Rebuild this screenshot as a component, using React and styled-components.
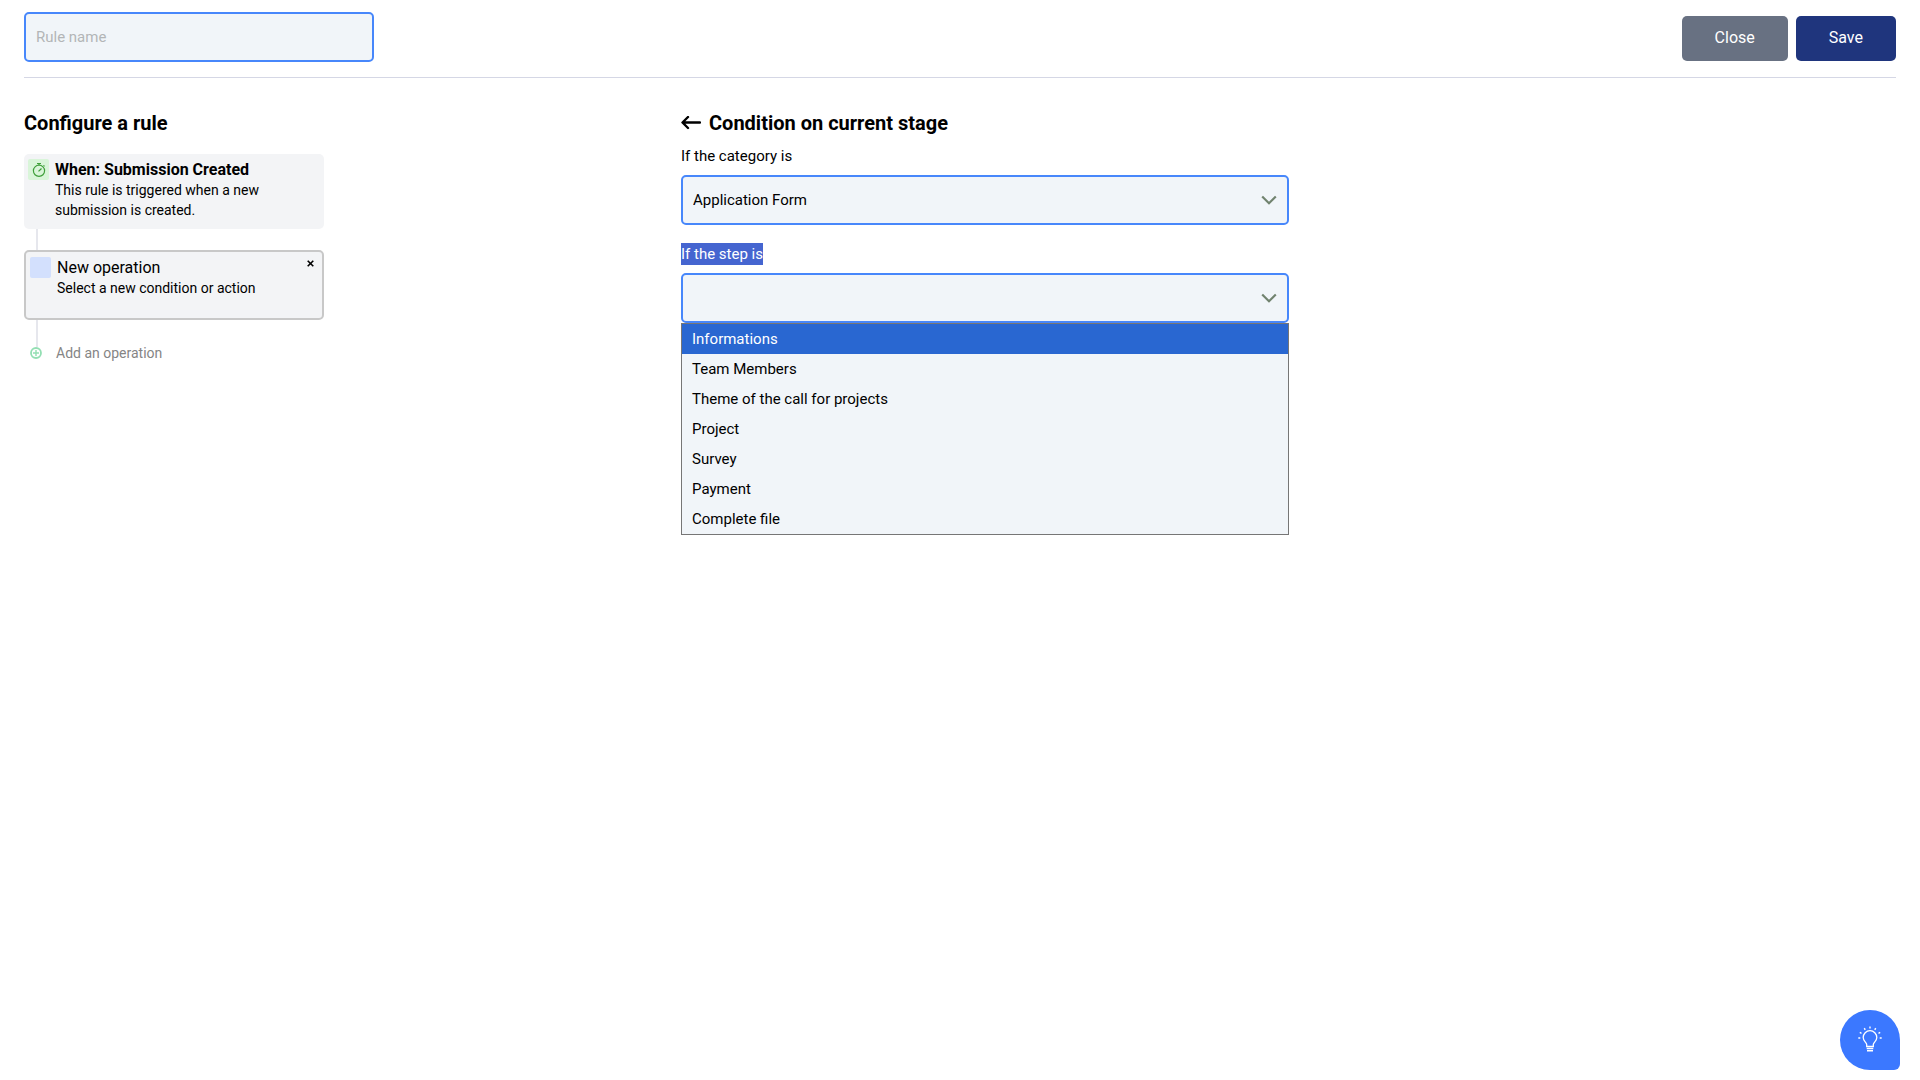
import { useState } from "react";
import styled, { createGlobalStyle } from "styled-components";

const steps = [
  "Informations",
  "Team Members",
  "Theme of the call for projects",
  "Project",
  "Survey",
  "Payment",
  "Complete file",
];

function Header() {
  const [name, setName] = useState("");

  return (
    <HeaderContainer>
      <RuleNameInput
        aria-label="Rule name"
        placeholder="Rule name"
        value={name}
        onChange={(e) => setName(e.target.value)}
      />
      <HeaderActions>
        <ActionButton>Close</ActionButton>
        <ActionButton $primary>Save</ActionButton>
      </HeaderActions>
    </HeaderContainer>
  );
}

function RuleColumn() {
  return (
    <section>
      <Heading>Configure a rule</Heading>
      <Card>
        <CardIcon $color="#d9f5d9">
          <TimerIcon />
        </CardIcon>
        <CardText>
          <CardTitle $bold>When: Submission Created</CardTitle>
          <CardDescription>
            This rule is triggered when a new submission is created.
          </CardDescription>
        </CardText>
      </Card>
      <Connector />
      <Card $selected>
        <CardIcon $color="#d3e0fd" />
        <CardText>
          <CardTitle>New operation</CardTitle>
          <CardDescription>Select a new condition or action</CardDescription>
        </CardText>
        <RemoveButton aria-label="Remove operation">
          <svg width="8" height="7" viewBox="0 0 8 7">
            <path d="M.7.7l5.6 5.6M6.3.7L.7 6.3" stroke="#000" strokeWidth="1.6" />
          </svg>
        </RemoveButton>
      </Card>
      <Connector $long />
      <AddButton>
        <svg width="12" height="12" viewBox="0 0 12 12" fill="none" stroke="#93dfb3">
          <circle cx="6" cy="6" r="5" strokeWidth="1.8" />
          <path d="M6 3v6M3 6h6" strokeWidth="1.4" />
        </svg>
        Add an operation
      </AddButton>
    </section>
  );
}

function ConditionColumn() {
  const [step, setStep] = useState(steps[0]);

  return (
    <section>
      <TitleRow>
        <BackButton aria-label="Back">
          <svg width="20" height="14" viewBox="0 0 20 14" fill="none" stroke="#000">
            <path
              d="M7 1L1.500 6.500L7 12M2 6.500H19"
              strokeWidth="2.4"
              strokeLinecap="round"
              strokeLinejoin="round"
            />
          </svg>
        </BackButton>
        <Heading>Condition on current stage</Heading>
      </TitleRow>
      <Field>
        <Label htmlFor="category">If the category is</Label>
        <SelectBox>
          <Select id="category" defaultValue="form">
            <option value="form">Application Form</option>
          </Select>
          <Chevron />
        </SelectBox>
      </Field>
      <Field>
        <Label htmlFor="step">
          <Highlight>If the step is</Highlight>
        </Label>
        <SelectBox>
          <Select id="step" defaultValue="">
            <option value="" />
          </Select>
          <Chevron />
          <Options role="listbox" aria-label="If the step is">
            {steps.map((item) => (
              <Option
                key={item}
                role="option"
                aria-selected={item === step}
                $active={item === step}
                onMouseEnter={() => setStep(item)}
              >
                {item}
              </Option>
            ))}
          </Options>
        </SelectBox>
      </Field>
    </section>
  );
}

function TimerIcon() {
  return (
    <svg width="15" height="15" viewBox="0 0 15 15" fill="none" stroke="#3f9f3a">
      <circle cx="8" cy="8.8" r="5.6" strokeWidth="1.2" />
      <path d="M6 1.500h4M8 1.500v1.600M12.500 3.300l1 1" strokeWidth="1.2" />
      <path d="M7.500 9.400L10.500 6.500" strokeWidth="1.3" />
    </svg>
  );
}

function Chevron() {
  return (
    <ChevronIcon width="16" height="10" viewBox="0 0 16 10" fill="none">
      <path d="M1.2 1.5L8 8.2L14.8 1.5" stroke="#71836f" strokeWidth="2.2" />
    </ChevronIcon>
  );
}

function App() {
  return (
    <>
      <GlobalStyle />
      <Page>
        <Header />
        <Main>
          <RuleColumn />
          <ConditionColumn />
        </Main>
      </Page>
      <HelpButton aria-label="Help">
        <svg width="26" height="28" viewBox="0 0 26 28" fill="none" stroke="#fff">
          <path
            d="M9.7 20.5v-2C9.7 16.6 6.2 15 6.2 11.5a6.8 6.8 0 0 1 13.6 0C19.8 15 16.3 16.6 16.3 18.5v2z"
            strokeWidth="1.3"
          />
          <path d="M9.7 22.5h6.6M10 24.8h6" strokeWidth="1.4" />
          <path
            d="M13 .5v2M7.3 2.2l.9 1.7M18.7 2.2l-.9 1.7M2.8 6.3l1.7 1M23.2 6.3l-1.7 1M1.3 12h2M22.7 12h2"
            strokeWidth="1.4"
          />
        </svg>
      </HelpButton>
    </>
  );
}

export default App;

const GlobalStyle = createGlobalStyle`
  * {
    box-sizing: border-box;
  }
  body {
    margin: 0;
    background: #fff;
    color: #000;
    font-family: Roboto, sans-serif;
    font-size: 15px;
  }
  button, input, select {
    font-family: inherit;
  }
  svg {
    display: block;
    flex-shrink: 0;
  }
`;

const Page = styled.div`
  min-height: 100vh;
  padding: 0 24px;
`;

const HeaderContainer = styled.header`
  display: flex;
  justify-content: space-between;
  align-items: flex-end;
  padding: 12px 0 15px;
  border-bottom: 1px solid #d5d7e5;
`;

const RuleNameInput = styled.input`
  width: 350px;
  height: 50px;
  padding: 0 10px;
  border: 2px solid #4787fb;
  border-radius: 5px;
  background: #f1f5f9;
  font-size: 15px;
  outline: none;

  &::placeholder {
    color: #b3b5b7;
  }
`;

const HeaderActions = styled.div`
  display: flex;
  gap: 8px;
  padding-bottom: 1px;
`;

const ActionButton = styled.button`
  height: 45px;
  padding: 0 33px 2px;
  border: none;
  border-radius: 5px;
  background: ${(props) => (props.$primary ? "#1f357d" : "#687182")};
  color: #fff;
  font-size: 16px;
  font-weight: 400;
  cursor: pointer;
`;

const Main = styled.main`
  display: grid;
  grid-template-columns: 657fr 608fr 607fr;
  padding-top: 33px;
`;

const Heading = styled.h2`
  margin: 0;
  font-size: 20px;
  font-weight: 700;
  line-height: 24px;
`;

const Card = styled.div`
  display: flex;
  align-items: flex-start;
  gap: 6px;
  width: 300px;
  min-height: ${(props) => (props.$selected ? "70px" : "75px")};
  padding: 5px 4px;
  border: ${(props) => (props.$selected ? "2px solid #c8c8c8" : "none")};
  border-radius: 5px;
  background: #f3f4f6;

  ${Heading} + & {
    margin-top: 19px;
  }
`;

const CardIcon = styled.div`
  display: flex;
  justify-content: center;
  align-items: center;
  flex-shrink: 0;
  width: 21px;
  height: 21px;
  border-radius: 2px;
  background: ${(props) => props.$color};
`;

const CardText = styled.div`
  flex: 1;
`;

const CardTitle = styled.div`
  font-size: 16px;
  font-weight: ${(props) => (props.$bold ? 700 : 400)};
  line-height: 21px;
`;

const CardDescription = styled.div`
  max-width: 220px;
  font-size: 14px;
  line-height: 20px;
`;

const RemoveButton = styled.button`
  padding: 3px;
  border: none;
  background: transparent;
  cursor: pointer;
`;

const Connector = styled.div`
  width: 2px;
  height: ${(props) => (props.$long ? "27px" : "21px")};
  margin-left: 12px;
  background: #e6e7ed;
`;

const AddButton = styled.button`
  display: flex;
  align-items: center;
  gap: 14px;
  height: 12px;
  padding: 0 6px;
  border: none;
  background: transparent;
  color: #858585;
  font-size: 14px;
  cursor: pointer;
`;

const TitleRow = styled.div`
  display: flex;
  align-items: center;
  gap: 8px;
`;

const BackButton = styled.button`
  padding: 0;
  border: none;
  background: transparent;
  cursor: pointer;
`;

const Field = styled.div`
  margin-bottom: 8px;
  padding-top: 10px;
`;

const Label = styled.label`
  display: block;
  margin-bottom: 8px;
  line-height: 22px;
`;

const Highlight = styled.span`
  display: inline-block;
  background: #4565d0;
  color: #fff;
`;

const SelectBox = styled.div`
  position: relative;
`;

const Select = styled.select`
  appearance: none;
  display: block;
  width: 100%;
  height: 50px;
  padding: 0 40px 0 10px;
  border: 2px solid #4787fb;
  border-radius: 5px;
  background: #f1f5f9;
  color: #000;
  font-size: 15px;
`;

const ChevronIcon = styled.svg`
  position: absolute;
  top: 20px;
  right: 12px;
  pointer-events: none;
`;

const Options = styled.ul`
  position: absolute;
  top: 100%;
  left: 0;
  right: 0;
  margin: 0;
  padding: 0;
  border: 1px solid #767676;
  background: #f1f5f9;
  list-style: none;
`;

const Option = styled.li`
  padding: 0 10px;
  background: ${(props) => (props.$active ? "#2967d1" : "transparent")};
  color: ${(props) => (props.$active ? "#fff" : "#000")};
  line-height: 30px;
  cursor: default;
`;

const HelpButton = styled.button`
  position: fixed;
  right: 20px;
  bottom: 10px;
  display: flex;
  justify-content: center;
  align-items: center;
  width: 60px;
  height: 60px;
  padding: 0;
  border: none;
  border-radius: 30px 30px 6px 30px;
  background: #3b78ff;
  cursor: pointer;
`;
